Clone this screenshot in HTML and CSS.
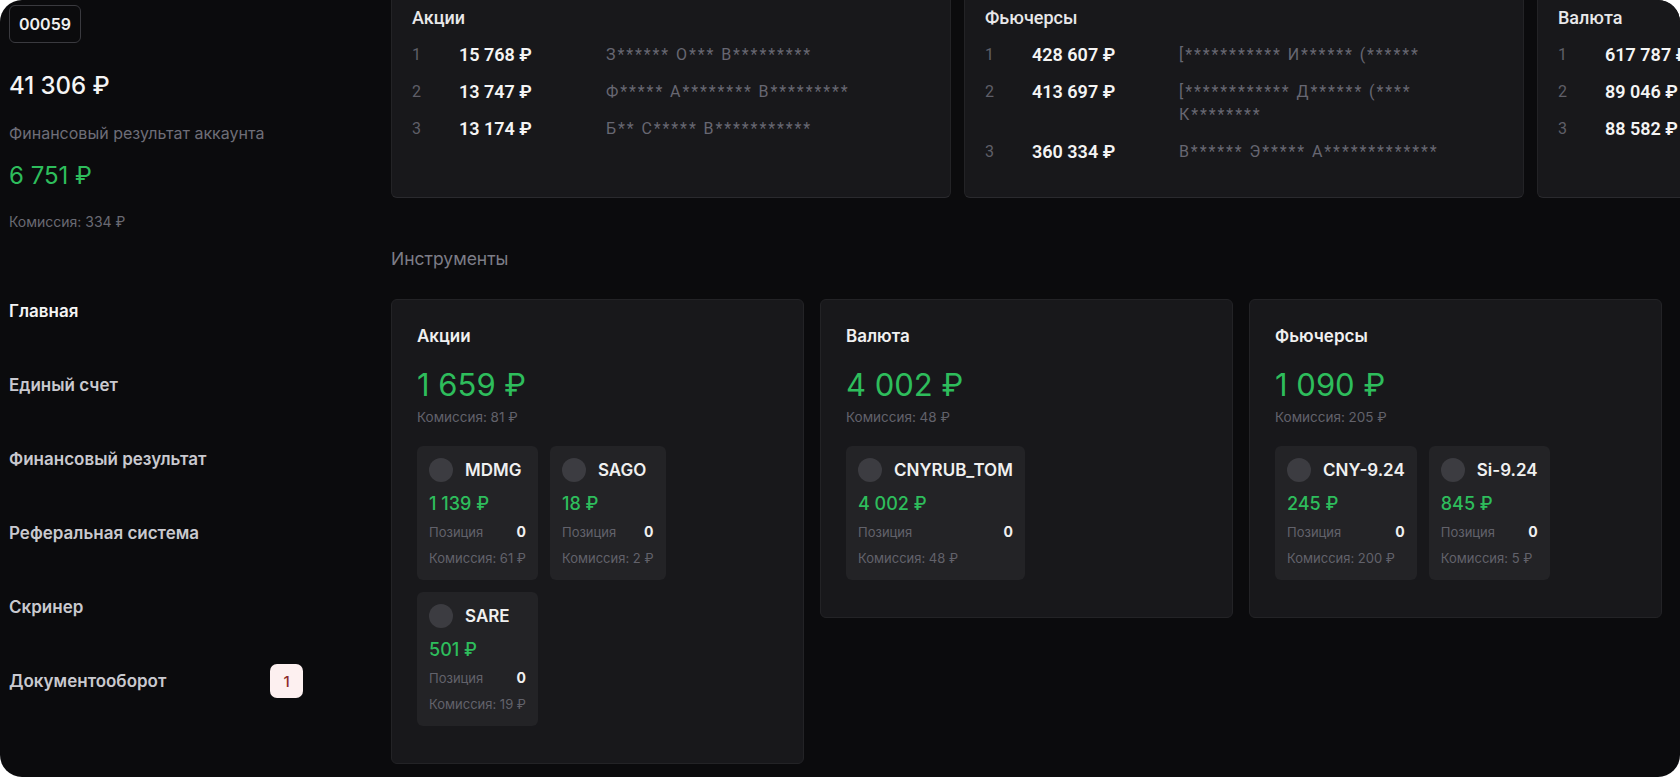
FILE: index.html
```html
<!DOCTYPE html>
<html lang="ru">
<head>
<meta charset="utf-8">
<title>Главная</title>
<link rel="stylesheet" href="styles.css">
</head>
<body>
<div class="frame">
  <aside class="sidebar">
    <div class="acc-badge">00059</div>
    <div class="acc-total">41 306 ₽</div>
    <div class="acc-label">Финансовый результат аккаунта</div>
    <div class="acc-result">6 751 ₽</div>
    <div class="acc-fee">Комиссия: 334 ₽</div>
    <nav class="nav">
      <a class="nav-item active">Главная</a>
      <a class="nav-item">Единый счет</a>
      <a class="nav-item">Финансовый результат</a>
      <a class="nav-item">Реферальная система</a>
      <a class="nav-item">Скринер</a>
      <a class="nav-item">Документооборот <span class="count">1</span></a>
    </nav>
  </aside>

  <main class="main">
    <div class="top-row">
      <section class="top-card">
        <h3 class="top-title">Акции</h3>
        <div class="rank">
          <span class="r-num">1</span><span class="r-val">15 768 ₽</span><span class="r-name">З****** О*** В*********</span>
          <span class="r-num">2</span><span class="r-val">13 747 ₽</span><span class="r-name">Ф***** А******** В*********</span>
          <span class="r-num">3</span><span class="r-val">13 174 ₽</span><span class="r-name">Б** С***** В***********</span>
        </div>
      </section>
      <section class="top-card">
        <h3 class="top-title">Фьючерсы</h3>
        <div class="rank">
          <span class="r-num">1</span><span class="r-val">428 607 ₽</span><span class="r-name">[*********** И****** (******</span>
          <span class="r-num">2</span><span class="r-val">413 697 ₽</span><span class="r-name">[************ Д****** (**** К********</span>
          <span class="r-num">3</span><span class="r-val">360 334 ₽</span><span class="r-name">В****** Э***** А*************</span>
        </div>
      </section>
      <section class="top-card">
        <h3 class="top-title">Валюта</h3>
        <div class="rank">
          <span class="r-num">1</span><span class="r-val">617 787 ₽</span><span class="r-name">С***** Е******* В********</span>
          <span class="r-num">2</span><span class="r-val">89 046 ₽</span><span class="r-name">М****** А***** П*******</span>
          <span class="r-num">3</span><span class="r-val">88 582 ₽</span><span class="r-name">К******* Д***** С*******</span>
        </div>
      </section>
    </div>

    <h2 class="section-title">Инструменты</h2>

    <div class="inst-grid">
      <section class="inst-card">
        <h3 class="inst-title">Акции</h3>
        <div class="inst-value">1 659 ₽</div>
        <div class="inst-fee">Комиссия: 81 ₽</div>
        <div class="subs">
          <div class="sub">
            <div class="sub-head"><span class="dot"></span><span class="ticker">MDMG</span></div>
            <div class="sub-val">1 139 ₽</div>
            <div class="sub-row"><span>Позиция</span><b>0</b></div>
            <div class="sub-row"><span>Комиссия: 61 ₽</span></div>
          </div>
          <div class="sub">
            <div class="sub-head"><span class="dot"></span><span class="ticker">SAGO</span></div>
            <div class="sub-val">18 ₽</div>
            <div class="sub-row"><span>Позиция</span><b>0</b></div>
            <div class="sub-row"><span>Комиссия: 2 ₽</span></div>
          </div>
          <div class="sub">
            <div class="sub-head"><span class="dot"></span><span class="ticker">SARE</span></div>
            <div class="sub-val">501 ₽</div>
            <div class="sub-row"><span>Позиция</span><b>0</b></div>
            <div class="sub-row"><span>Комиссия: 19 ₽</span></div>
          </div>
        </div>
      </section>

      <section class="inst-card">
        <h3 class="inst-title">Валюта</h3>
        <div class="inst-value">4 002 ₽</div>
        <div class="inst-fee">Комиссия: 48 ₽</div>
        <div class="subs">
          <div class="sub">
            <div class="sub-head"><span class="dot"></span><span class="ticker">CNYRUB_TOM</span></div>
            <div class="sub-val">4 002 ₽</div>
            <div class="sub-row"><span>Позиция</span><b>0</b></div>
            <div class="sub-row"><span>Комиссия: 48 ₽</span></div>
          </div>
        </div>
      </section>

      <section class="inst-card">
        <h3 class="inst-title">Фьючерсы</h3>
        <div class="inst-value">1 090 ₽</div>
        <div class="inst-fee">Комиссия: 205 ₽</div>
        <div class="subs">
          <div class="sub">
            <div class="sub-head"><span class="dot"></span><span class="ticker">CNY-9.24</span></div>
            <div class="sub-val">245 ₽</div>
            <div class="sub-row"><span>Позиция</span><b>0</b></div>
            <div class="sub-row"><span>Комиссия: 200 ₽</span></div>
          </div>
          <div class="sub">
            <div class="sub-head"><span class="dot"></span><span class="ticker">Si-9.24</span></div>
            <div class="sub-val">845 ₽</div>
            <div class="sub-row"><span>Позиция</span><b>0</b></div>
            <div class="sub-row"><span>Комиссия: 5 ₽</span></div>
          </div>
        </div>
      </section>
    </div>
  </main>
</div>
</body>
</html>
```

FILE: styles.css
```css
* { box-sizing: border-box; margin: 0; padding: 0; }

html, body {
  width: 1680px;
  height: 778px;
  background: #ffffff;
  overflow: hidden;
}

body {
  font-family: Inter, "Noto Sans", "DejaVu Sans", sans-serif;
  color: #e8e8ea;
}

.frame {
  width: 1680px;
  height: 777px;
  background: #0b0b0d;
  border-radius: 22px;
  overflow: hidden;
  display: flex;
}

/* ---------- sidebar ---------- */
.sidebar {
  width: 391px;
  flex-shrink: 0;
  padding: 5px 9px 0;
  display: flex;
  flex-direction: column;
  align-items: flex-start;
}

.acc-badge {
  height: 38px;
  line-height: 36px;
  padding: 0 9px;
  border: 1px solid #3a3a3f;
  border-radius: 6px;
  font-size: 16px;
  font-weight: 600;
  color: #f0f0f0;
}

.acc-total {
  margin-top: 28px;
  font-size: 24px;
  line-height: 30px;
  font-weight: 500;
  color: #f4f4f4;
}

.acc-label {
  margin-top: 22px;
  font-size: 16px;
  line-height: 20px;
  color: #6e6e78;
}

.acc-result {
  margin-top: 18px;
  font-size: 24px;
  line-height: 30px;
  color: #2ebd5c;
}

.acc-fee {
  margin-top: 22px;
  font-size: 14px;
  line-height: 18px;
  color: #6a6a73;
}

.nav {
  margin-top: 43px;
  display: flex;
  flex-direction: column;
  width: 294px;
}

.nav-item {
  height: 74px;
  display: flex;
  align-items: center;
  justify-content: space-between;
  font-size: 17px;
  font-weight: 600;
  color: #c9c9cf;
}

.nav-item.active { color: #f4f4f4; }

.count {
  width: 33px;
  height: 34px;
  border-radius: 7px;
  background: #fdf0f0;
  color: #8e2b2b;
  font-size: 15px;
  font-weight: 500;
  display: flex;
  align-items: center;
  justify-content: center;
}

/* ---------- main ---------- */
.main {
  flex: 1;
  min-width: 0;
  padding-right: 18px;
  display: flex;
  flex-direction: column;
}

.top-row {
  display: flex;
  gap: 13px;
  margin-top: -12px;
}

.top-card {
  width: 560px;
  flex-shrink: 0;
  background: #18181b;
  border: 1px solid #232326;
  border-bottom-color: #2a2a2e;
  border-radius: 6px;
  padding: 17px 20px 34px 20px;
  font-family: Roboto, Inter, "Noto Sans", sans-serif;
}

.top-title {
  font-size: 18px;
  line-height: 24px;
  font-weight: 500;
  color: #e8e8ea;
}

.rank {
  margin-top: 13px;
  display: grid;
  grid-template-columns: 47px 147px 262px;
  row-gap: 14px;
  line-height: 23px;
}

.r-num {
  font-size: 16px;
  color: #5f5f68;
}

.r-val {
  font-size: 18px;
  font-weight: 600;
  color: #f4f4f4;
}

.r-name {
  font-size: 16px;
  letter-spacing: 1.9px;
  color: #676772;
}

.section-title {
  margin-top: 50px;
  font-size: 17.5px;
  line-height: 22px;
  font-weight: 400;
  color: #7d7d87;
}

.inst-grid {
  margin-top: 29px;
  display: grid;
  grid-template-columns: repeat(3, 1fr);
  gap: 16px;
  align-items: start;
}

.inst-card {
  background: #18181b;
  border: 1px solid #232326;
  border-radius: 6px;
  padding: 24px 25px 37px;
}

.inst-title {
  font-size: 17px;
  line-height: 24px;
  font-weight: 600;
  color: #f0f0f0;
}

.inst-value {
  margin-top: 20px;
  font-size: 31px;
  line-height: 34px;
  color: #2ebd5c;
}

.inst-fee {
  margin-top: 7px;
  font-size: 13.5px;
  line-height: 16px;
  color: #62626b;
}

.subs {
  margin-top: 21px;
  display: flex;
  flex-wrap: wrap;
  gap: 12px;
  max-width: 340px;
}

.sub {
  background: #232326;
  border-radius: 6px;
  padding: 12px 12px 13px;
}

.sub-head {
  display: flex;
  align-items: center;
  gap: 12px;
  height: 24px;
}

.dot {
  width: 24px;
  height: 24px;
  border-radius: 50%;
  background: #3c3c41;
  flex-shrink: 0;
}

.ticker {
  font-size: 17px;
  font-weight: 600;
  color: #f0f0f0;
  white-space: nowrap;
}

.sub-val {
  margin-top: 11px;
  font-size: 18px;
  line-height: 22px;
  font-weight: 500;
  color: #2ebd5c;
}

.sub-row {
  margin-top: 8px;
  display: flex;
  justify-content: space-between;
  font-size: 13px;
  line-height: 18px;
  color: #62626b;
  white-space: nowrap;
}

.sub-val + .sub-row { margin-top: 8px; }

.sub-row b {
  font-size: 14px;
  font-weight: 700;
  color: #f0f0f0;
}
```
